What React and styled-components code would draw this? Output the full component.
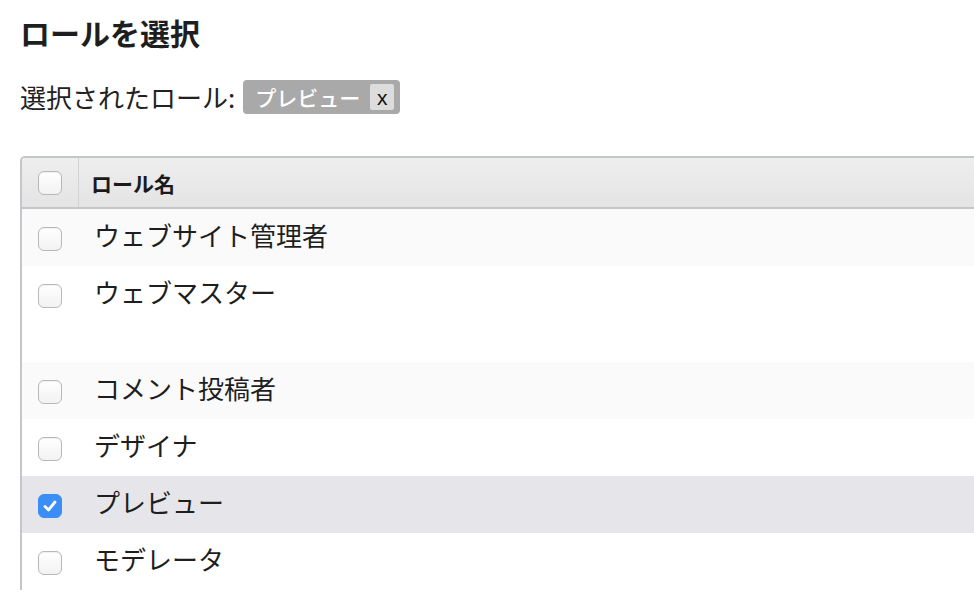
import { useState } from "react"
import styled, { createGlobalStyle } from "styled-components"

const GlobalStyle = createGlobalStyle`
  html, body {
    margin: 0;
    padding: 0;
    overflow: hidden;
    background: #fff;
  }
  body {
    font-family: "Noto Sans CJK JP", "Noto Sans", sans-serif;
    color: #222;
  }
`

const roles = [
  { id: "site-admin", name: "ウェブサイト管理者" },
  { id: "webmaster", name: "ウェブマスター", tall: true },
  { id: "commenter", name: "コメント投稿者" },
  { id: "designer", name: "デザイナ" },
  { id: "preview", name: "プレビュー" },
  { id: "moderator", name: "モデレータ" },
]

const Page = styled.main`
  padding: 12px 0 0 20px;
  width: 1000px;
`

const Title = styled.h2`
  margin: 0;
  font-size: 30px;
  font-weight: 700;
  line-height: 40px;
  color: #1e1e1e;
`

const Selected = styled.div`
  display: flex;
  align-items: center;
  gap: 8px;
  margin-top: 28px;
  font-size: 26px;
  line-height: 34px;
  color: #222;
`

const Tag = styled.span`
  display: inline-flex;
  align-items: center;
  gap: 10px;
  height: 34px;
  box-sizing: border-box;
  padding: 0 6px 0 12px;
  background: #a9a9a9;
  border-radius: 4px;
  color: #fff;
  font-size: 21px;
  font-weight: 500;
`

const TagClose = styled.button`
  all: unset;
  display: flex;
  align-items: center;
  justify-content: center;
  width: 24px;
  height: 26px;
  background: #dcdcdc;
  border-radius: 2px;
  color: #111;
  font-family: "Liberation Sans", Arial, sans-serif;
  font-size: 21px;
  line-height: 1;
`

const Table = styled.div`
  margin-top: 42px;
  border: 2px solid #c3c7cb;
  border-right: none;
  border-bottom: none;
  border-radius: 5px 0 0 0;
  overflow: hidden;
`

const HeadRow = styled.div`
  display: flex;
  height: 49px;
  background: linear-gradient(#eeeeee, #e4e4e4);
  border-bottom: 2px solid #c3c7cb;
`

const CheckCell = styled.div`
  display: flex;
  justify-content: center;
  align-items: ${({ $top }) => ($top ? "flex-start" : "center")};
  padding-top: ${({ $top }) => ($top ? "18px" : "0")};
  width: 56px;
  flex: none;
  border-right: ${({ $divider }) => ($divider ? "1px solid #d2d2d2" : "1px solid transparent")};
`

const HeadLabel = styled.div`
  display: flex;
  align-items: center;
  padding-left: 12px;
  font-size: 21px;
  font-weight: 700;
  color: #1a1a1a;
`

const Row = styled.div`
  display: flex;
  height: ${({ $tall }) => ($tall ? "96px" : "57px")};
  background: ${({ $selected, $odd }) =>
    $selected ? "#e6e6ea" : $odd ? "#fafafa" : "#ffffff"};
`

const Name = styled.div`
  padding: 11px 0 0 15px;
  font-size: 26px;
  line-height: 30px;
  color: #1e1e1e;
`

const Box = styled.span`
  display: flex;
  align-items: center;
  justify-content: center;
  width: 24px;
  height: 24px;
  box-sizing: border-box;
  border-radius: 6px;
  border: 1px solid ${({ $checked }) => ($checked ? "#3a8ef6" : "#b8b8b8")};
  background: ${({ $checked }) =>
    $checked ? "#3a8ef6" : "linear-gradient(#ffffff, #f2f2f2)"};
  box-shadow: ${({ $checked }) => ($checked ? "none" : "inset 0 1px 1px rgba(0,0,0,0.06)")};
  cursor: pointer;
`

function Checkbox({ checked, onClick }) {
  return (
    <Box $checked={checked} onClick={onClick}>
      {checked && (
        <svg width="18" height="18" viewBox="0 0 18 18">
          <path
            d="M4 9.5 L7.5 13 L14 5"
            fill="none"
            stroke="#fff"
            strokeWidth="2.8"
            strokeLinecap="round"
            strokeLinejoin="round"
          />
        </svg>
      )}
    </Box>
  )
}

export default function App() {
  const [selected, setSelected] = useState(["preview"])
  function toggle(id) {
    setSelected((sel) =>
      sel.includes(id) ? sel.filter((s) => s !== id) : [...sel, id]
    )
  }
  return (
    <Page>
      <GlobalStyle />
      <Title>ロールを選択</Title>
      <Selected>
        <span>選択されたロール:</span>
        {roles
          .filter((r) => selected.includes(r.id))
          .map((r) => (
            <Tag key={r.id}>
              {r.name}
              <TagClose onClick={() => toggle(r.id)}>x</TagClose>
            </Tag>
          ))}
      </Selected>
      <Table>
        <HeadRow>
          <CheckCell $divider>
            <Checkbox checked={false} />
          </CheckCell>
          <HeadLabel>ロール名</HeadLabel>
        </HeadRow>
        {roles.map((r, i) => (
          <Row
            key={r.id}
            $tall={r.tall}
            $odd={i % 2 === 0}
            $selected={selected.includes(r.id)}
          >
            <CheckCell $top>
              <Checkbox
                checked={selected.includes(r.id)}
                onClick={() => toggle(r.id)}
              />
            </CheckCell>
            <Name>{r.name}</Name>
          </Row>
        ))}
      </Table>
    </Page>
  )
}
